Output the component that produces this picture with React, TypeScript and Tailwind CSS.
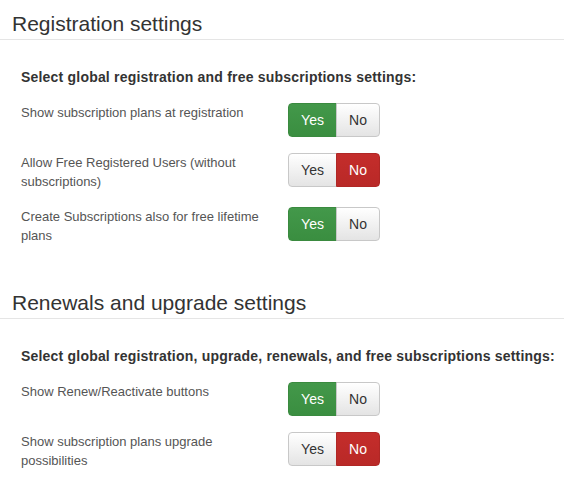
import React, { useState } from 'react';

type Setting = { id: string; label: string; value: boolean };

const YesNo: React.FC<{ value: boolean; onChange: (v: boolean) => void }> = ({ value, onChange }) => {
  const base = 'h-[34px] flex items-center justify-center text-[14px] border';
  return (
    <div className="flex shrink-0">
      <button
        onClick={() => onChange(true)}
        className={`${base} w-[49px] rounded-l-[4px] ${
          value
            ? 'bg-gradient-to-b from-[#43984a] to-[#3a8e40] border-[#3a8a3f] text-white'
            : 'bg-gradient-to-b from-white to-[#e4e4e4] border-[#c8c8c8] text-[#333]'
        }`}
      >
        Yes
      </button>
      <button
        onClick={() => onChange(false)}
        className={`${base} w-[44px] -ml-px rounded-r-[4px] ${
          !value
            ? 'bg-gradient-to-b from-[#c42d2b] to-[#b92927] border-[#b02725] text-white'
            : 'bg-gradient-to-b from-white to-[#e4e4e4] border-[#c8c8c8] text-[#333]'
        }`}
      >
        No
      </button>
    </div>
  );
};

const Section: React.FC<{
  title: string;
  subtitle: string;
  items: Setting[];
  onToggle: (id: string, v: boolean) => void;
}> = ({ title, subtitle, items, onToggle }) => (
  <div>
    <h2 className="text-[21px] leading-[23px] text-[#333] pl-[12px] pb-[4px] border-b border-[#e5e5e5]">{title}</h2>
    <div className="pl-[21px] pt-[28px]">
      <div className="text-[14px] leading-[19px] tracking-[0.2px] font-bold text-[#333]">{subtitle}</div>
      <div className="mt-[16px] flex flex-col gap-[16px]">
        {items.map(item => (
          <div key={item.id} className="flex items-start">
            <div className="w-[267px] pr-[12px] pt-[1px] text-[13px] leading-[18.5px] text-[#555]">{item.label}</div>
            <YesNo value={item.value} onChange={v => onToggle(item.id, v)} />
          </div>
        ))}
      </div>
    </div>
  </div>
);

export default function App() {
  const [settings, setSettings] = useState<Setting[]>([
    { id: 'showPlans', label: 'Show subscription plans at registration', value: true },
    { id: 'freeUsers', label: 'Allow Free Registered Users (without subscriptions)', value: false },
    { id: 'lifetime', label: 'Create Subscriptions also for free lifetime plans', value: true },
    { id: 'renew', label: 'Show Renew/Reactivate buttons', value: true },
    { id: 'upgrade', label: 'Show subscription plans upgrade possibilities', value: false },
  ]);

  const toggle = (id: string, v: boolean) =>
    setSettings(prev => prev.map(s => (s.id === id ? { ...s, value: v } : s)));

  return (
    <div className="w-[564px] min-h-[499px] bg-white pt-[12px] font-['Liberation_Sans',Arial,sans-serif]">
      <Section
        title="Registration settings"
        subtitle="Select global registration and free subscriptions settings:"
        items={settings.slice(0, 3)}
        onToggle={toggle}
      />
      <div className="mt-[46px]">
        <Section
          title="Renewals and upgrade settings"
          subtitle="Select global registration, upgrade, renewals, and free subscriptions settings:"
          items={settings.slice(3)}
          onToggle={toggle}
        />
      </div>
    </div>
  );
}
